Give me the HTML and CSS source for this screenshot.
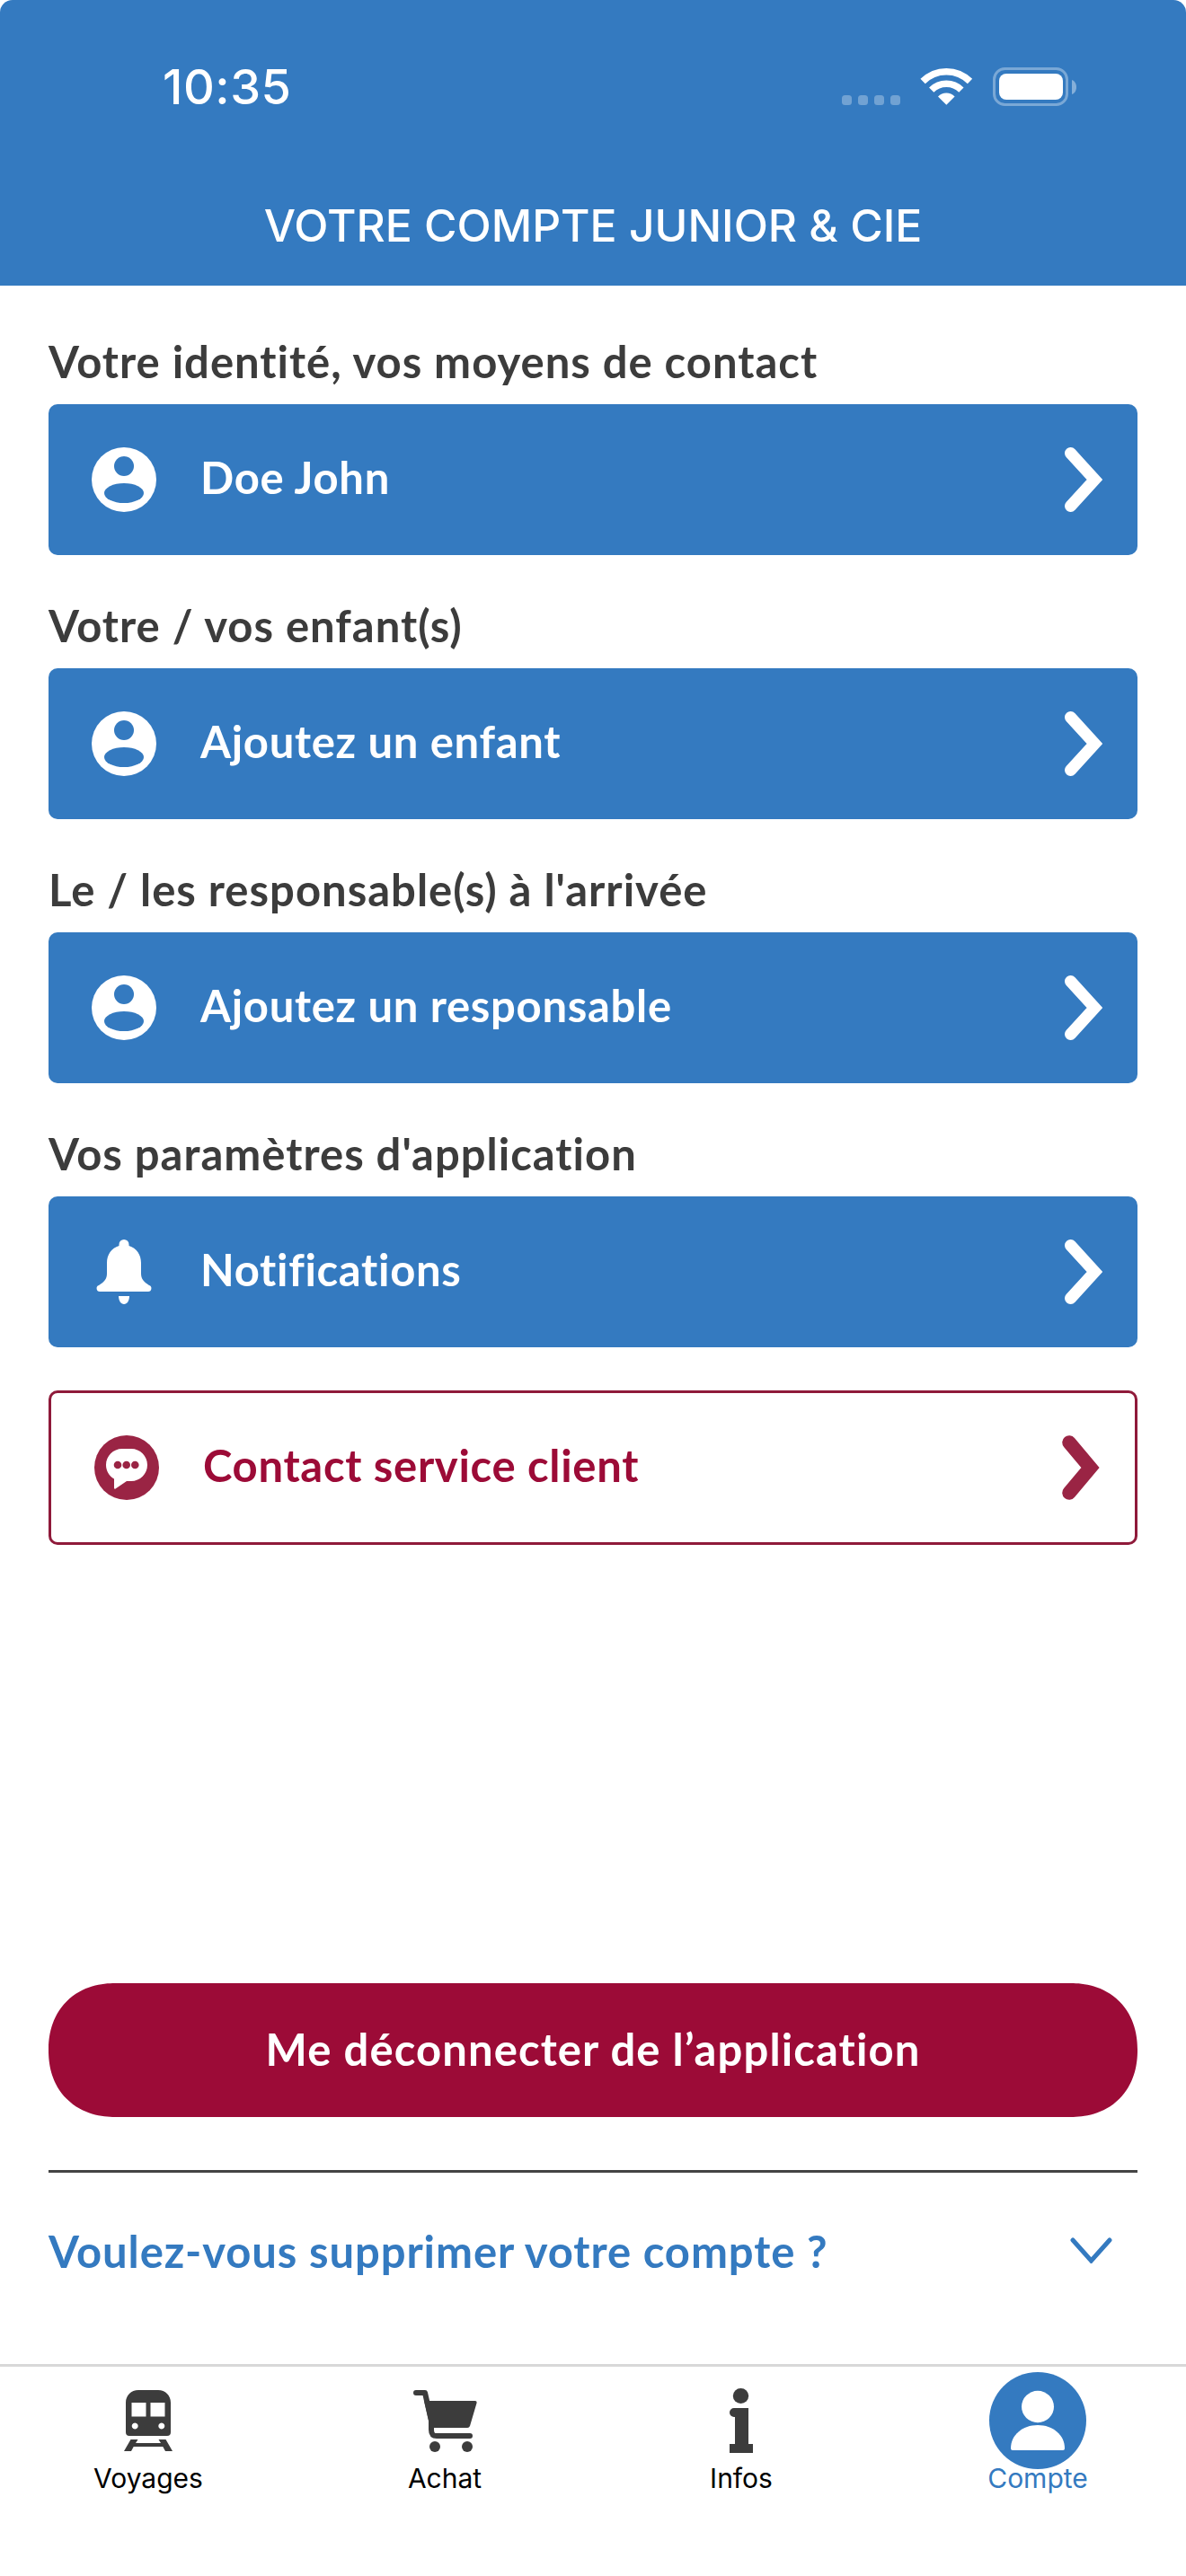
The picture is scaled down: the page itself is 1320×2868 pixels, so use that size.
FILE: index.html
```html
<!DOCTYPE html>
<html lang="fr">
<head>
<meta charset="utf-8">
<title>Votre compte Junior &amp; Cie</title>
<link rel="stylesheet" href="styles.css">
</head>
<body>
<div class="phone">
  <header class="header">
    <div class="status">
      <span class="time">10:35</span>
      <svg class="status-icons" width="261" height="43" viewBox="0 0 261 43">
        <g fill="#fff" opacity=".3">
          <rect x="0" y="31" width="11" height="11" rx="3.5"/>
          <rect x="18" y="31" width="11" height="11" rx="3.5"/>
          <rect x="36" y="31" width="11" height="11" rx="3.5"/>
          <rect x="54" y="31" width="11" height="11" rx="3.5"/>
        </g>
        <g fill="none" stroke="#fff" stroke-width="7.5">
          <path d="M90.1 15.5A37 37 0 0 1 142.5 15.5"/>
          <path d="M99.7 25.1A23.5 23.5 0 0 1 132.9 25.1"/>
        </g>
        <path fill="#fff" d="M116.3 41.7L107 32.5A13 13 0 0 1 125.6 32.5Z"/>
        <rect x="169.5" y="1.5" width="81" height="40" rx="12" fill="none" stroke="#fff" stroke-opacity=".35" stroke-width="3"/>
        <path fill="#fff" fill-opacity=".4" d="M256 14C259 15 261 18 261 22S259 29 256 30Z"/>
        <rect x="175" y="7" width="71" height="29" rx="8" fill="#fff"/>
      </svg>
    </div>
    <h1 class="title">VOTRE COMPTE JUNIOR &amp; CIE</h1>
  </header>

  <main class="main">
    <section class="group">
      <h2 class="group-title">Votre identité, vos moyens de contact</h2>
      <a class="row">
        <svg class="row-icon" width="72" height="72" viewBox="0 0 72 72"><circle cx="36" cy="36" r="36" fill="#fff"/><circle cx="36" cy="21" r="11" fill="#347ac0"/><ellipse cx="36" cy="51" rx="22" ry="11" fill="#347ac0"/></svg>
        <span class="row-label">Doe John</span>
        <svg class="chevron" width="42" height="72" viewBox="0 0 42 72"><path d="M6.500 6.500L33.500 36L6.500 65.500" fill="none" stroke="#fff" stroke-width="13" stroke-linecap="round"/></svg>
      </a>
    </section>
    <section class="group">
      <h2 class="group-title">Votre / vos enfant(s)</h2>
      <a class="row">
        <svg class="row-icon" width="72" height="72" viewBox="0 0 72 72"><circle cx="36" cy="36" r="36" fill="#fff"/><circle cx="36" cy="21" r="11" fill="#347ac0"/><ellipse cx="36" cy="51" rx="22" ry="11" fill="#347ac0"/></svg>
        <span class="row-label">Ajoutez un enfant</span>
        <svg class="chevron" width="42" height="72" viewBox="0 0 42 72"><path d="M6.500 6.500L33.500 36L6.500 65.500" fill="none" stroke="#fff" stroke-width="13" stroke-linecap="round"/></svg>
      </a>
    </section>
    <section class="group">
      <h2 class="group-title">Le / les responsable(s) à l'arrivée</h2>
      <a class="row">
        <svg class="row-icon" width="72" height="72" viewBox="0 0 72 72"><circle cx="36" cy="36" r="36" fill="#fff"/><circle cx="36" cy="21" r="11" fill="#347ac0"/><ellipse cx="36" cy="51" rx="22" ry="11" fill="#347ac0"/></svg>
        <span class="row-label">Ajoutez un responsable</span>
        <svg class="chevron" width="42" height="72" viewBox="0 0 42 72"><path d="M6.500 6.500L33.500 36L6.500 65.500" fill="none" stroke="#fff" stroke-width="13" stroke-linecap="round"/></svg>
      </a>
    </section>
    <section class="group">
      <h2 class="group-title">Vos paramètres d'application</h2>
      <a class="row">
        <svg class="row-icon" width="72" height="72" viewBox="-6 0 72 72"><path fill="#fff" d="M30 0a5.5 5.5 0 0 1 5.5 5.5V7C44 9.5 49 17 49 26V38C49 44 52 47 58 51a3.6 3.6 0 0 1-1 7H3a3.6 3.6 0 0 1-1-7C8 47 11 44 11 38V26C11 17 16 9.5 24.5 7V5.5A5.5 5.5 0 0 1 30 0Z"/><path fill="#fff" d="M24 63H36C36 68 33.5 72 30 72S24 68 24 63Z"/></svg>
        <span class="row-label">Notifications</span>
        <svg class="chevron" width="42" height="72" viewBox="0 0 42 72"><path d="M6.500 6.500L33.500 36L6.500 65.500" fill="none" stroke="#fff" stroke-width="13" stroke-linecap="round"/></svg>
      </a>
    </section>
    <a class="row row-outline">
      <svg class="row-icon" width="72" height="72" viewBox="0 0 72 72"><circle cx="36" cy="36" r="36" fill="#9a2444"/><path fill="#fff" d="M31 15H41C51 15 59 23 59 33S51 51 41 51H36L23.5 59.5C22.6 60 22 59.5 22 58.5V48.5C16.5 45.5 13 39.500 13 33C13 23 21 15 31 15Z"/><circle cx="26" cy="33" r="4.300" fill="#9a2444"/><circle cx="35.700" cy="33" r="4.300" fill="#9a2444"/><circle cx="45.300" cy="33" r="4.300" fill="#9a2444"/></svg>
      <span class="row-label row-label-red">Contact service client</span>
      <svg class="chevron" width="42" height="72" viewBox="0 0 42 72"><path d="M8 8L31.500 36L8 64" fill="none" stroke="#9a2444" stroke-width="15.500" stroke-linecap="round"/></svg>
    </a>

    <div class="account-actions">
      <button class="logout" type="button">Me déconnecter de l’application</button>
      <div class="delete-row">
        <span class="delete-label">Voulez-vous supprimer votre compte ?</span>
        <svg class="delete-chevron" width="47" height="29" viewBox="0 0 47 29"><path d="M3 3L23.500 26L44 3" fill="none" stroke="#347ac0" stroke-width="5" stroke-linecap="round"/></svg>
      </div>
    </div>
  </main>

  <nav class="tabbar">
    <a class="tab">
      <span class="tab-icon">
        <svg width="54" height="68" viewBox="0 0 54 68"><path fill="#3c3c3c" fill-rule="evenodd" d="M16 0H38C46 0 52 6 52 14V47A4 4 0 0 1 48 51H6A4 4 0 0 1 2 47V14C2 6 8 0 16 0ZM8.500 14V29.500H24.500V14ZM29.500 14V29.500H45.500V14ZM12.200 36.500A3.500 3.500 0 1 0 12.201 36.500ZM41.800 36.500A3.500 3.500 0 1 0 41.801 36.500Z"/><path fill="#3c3c3c" d="M7.500 55H15.500L13 59H41L38.500 55H46.500L54 68H46L43.300 63H10.700L8 68H0Z"/></svg>
      </span>
      <span class="tab-label">Voyages</span>
    </a>
    <a class="tab">
      <span class="tab-icon">
        <svg width="71" height="69" viewBox="0 0 71 69"><path fill="none" stroke="#3c3c3c" stroke-width="6" stroke-linecap="round" stroke-linejoin="round" d="M3 3H13L20 34V44C20 49 22 51 26 51H63"/><path fill="#3c3c3c" d="M12 12H69A2 2 0 0 1 70.500 14.500L63 40A3 3 0 0 1 60 42H19Z"/><circle cx="24" cy="63" r="6" fill="#3c3c3c"/><circle cx="60" cy="63" r="6" fill="#3c3c3c"/></svg>
      </span>
      <span class="tab-label">Achat</span>
    </a>
    <a class="tab">
      <span class="tab-icon">
        <svg width="26" height="72" viewBox="0 0 26 72"><ellipse cx="12.500" cy="8.500" rx="8.700" ry="8.500" fill="#3c3c3c"/><path fill="#3c3c3c" d="M6 22H21V62H26V72H0V62H6V32H5A5 5 0 0 1 5 22Z"/></svg>
      </span>
      <span class="tab-label">Infos</span>
    </a>
    <a class="tab tab-active">
      <span class="tab-icon">
        <svg width="108" height="108" viewBox="0 0 108 108"><circle cx="54" cy="54" r="54" fill="#347ac0"/><ellipse cx="54" cy="38.500" rx="18" ry="17.700" fill="#fff"/><path fill="#fff" d="M26 87A2 2 0 0 1 24 85C24 70 37 59 54 59S84 70 84 85A2 2 0 0 1 82 87Z"/></svg>
      </span>
      <span class="tab-label">Compte</span>
    </a>
  </nav>
</div>
</body>
</html>
```

FILE: styles.css
```css
* { box-sizing: border-box; }

html, body {
  margin: 0;
  padding: 0;
  background: #fff;
}

.phone {
  width: 1320px;
  height: 2868px;
  display: flex;
  flex-direction: column;
  font-family: "Lato", "Liberation Sans", sans-serif;
  overflow: hidden;
}

/* Header */
.header {
  height: 318px;
  padding-top: 75px;
  background: #347ac0;
  border-radius: 14px 14px 0 0;
  color: #fff;
  font-family: "Inter", "Liberation Sans", sans-serif;
}

.status {
  height: 43px;
  display: flex;
  align-items: center;
  justify-content: space-between;
  padding: 0 122px 0 181px;
}

.time {
  font-size: 54px;
  font-weight: 500;
  letter-spacing: .5px;
  line-height: 43px;
}

.status-icons { display: block; }

.title {
  margin: 103px 0 0;
  font-size: 49.8px;
  font-weight: 500;
  line-height: 60px;
  text-align: center;
}

/* Main */
.main {
  flex: 1;
  display: flex;
  flex-direction: column;
  padding: 64px 54px 0;
}

.group { margin-bottom: 58px; }

.group-title {
  margin: 0 0 28px;
  font-size: 49px;
  font-weight: 700;
  letter-spacing: 1px;
  line-height: 40px;
  color: #3c3c3c;
}

.group:nth-of-type(4) { margin-bottom: 48px; }

.row {
  height: 168px;
  display: flex;
  align-items: center;
  padding: 0 39px 0 48px;
  background: #347ac0;
  border-radius: 10px;
}

.row-outline {
  height: 172px;
  background: #fff;
  border: 3px solid #8f1a3a;
  padding: 0 39px 0 48px;
}

.row-icon { flex: none; }

.row-label {
  margin: 0 0 6px 49px;
  font-size: 49px;
  font-weight: 700;
  letter-spacing: .7px;
  color: #fff;
}

.row-label-red { color: #9c0b37; }

.chevron {
  flex: none;
  margin-left: auto;
}

/* Account actions */
.account-actions { margin-top: auto; }

.logout {
  display: block;
  width: 100%;
  height: 149px;
  border: 0;
  border-radius: 74px;
  corner-shape: superellipse(1.12);
  background: #9c0b37;
  color: #fff;
  font-family: inherit;
  font-size: 49px;
  font-weight: 700;
  letter-spacing: 1.1px;
  padding-bottom: 4px;
}

.delete-row {
  height: 216px;
  margin-top: 59px;
  padding: 0 28px 40px 0;
  border-top: 3px solid #444;
  display: flex;
  align-items: center;
  justify-content: space-between;
}

.delete-label {
  font-size: 49px;
  font-weight: 700;
  letter-spacing: .9px;
  color: #347ac0;
}

/* Tab bar */
.tabbar {
  height: 236px;
  padding-top: 6px;
  border-top: 3px solid #d8d8d8;
  display: grid;
  grid-template-columns: repeat(4, 1fr);
  align-content: start;
  font-family: "Inter", "Liberation Sans", sans-serif;
}

.tab {
  display: flex;
  flex-direction: column;
  align-items: center;
}

.tab-icon {
  height: 108px;
  display: flex;
  align-items: center;
  justify-content: center;
}

.tab-label {
  font-size: 30px;
  line-height: 20px;
  color: #000;
}

.tab-active .tab-label { color: #347ac0; }
```
